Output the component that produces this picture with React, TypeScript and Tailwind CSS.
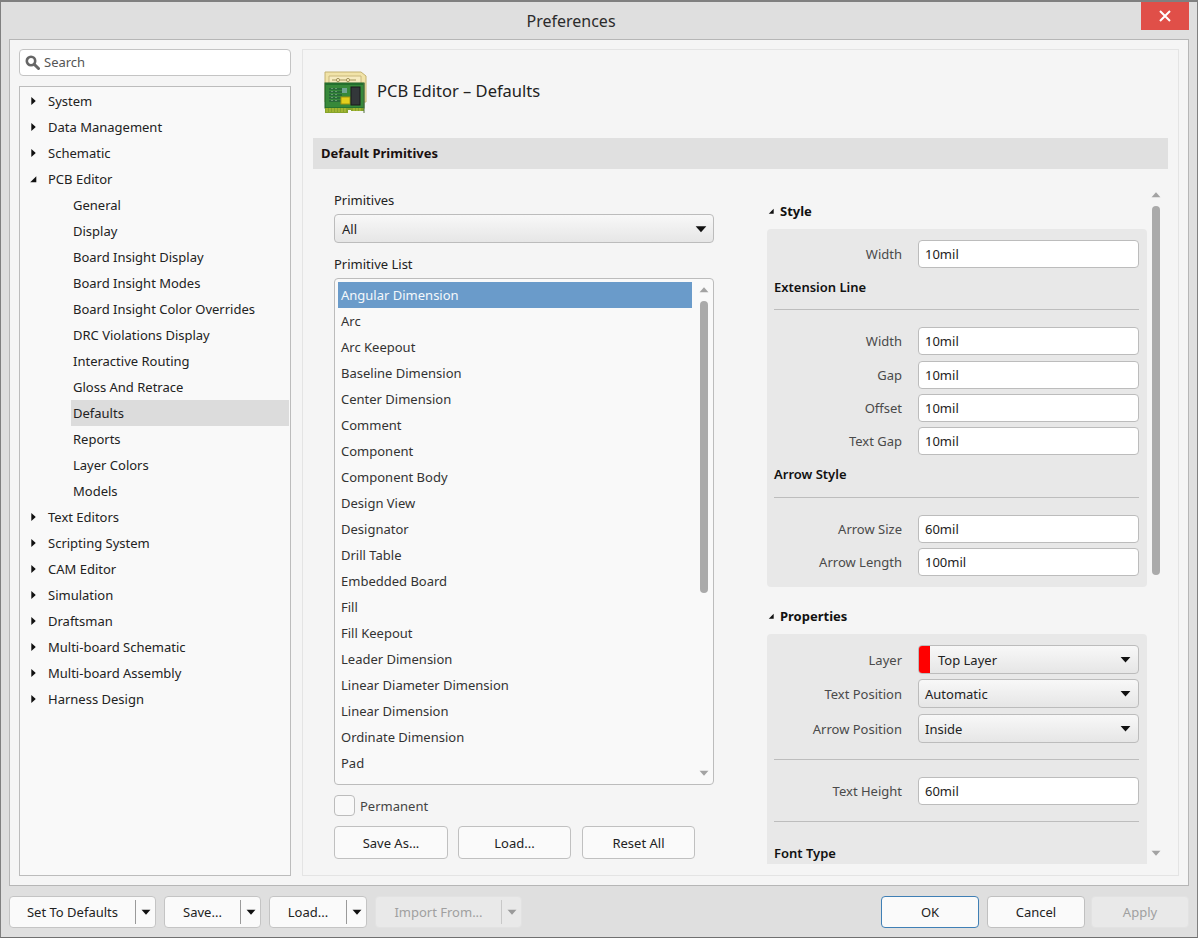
import clsx from "clsx";

const tree = [
  { label: "System" },
  { label: "Data Management" },
  { label: "Schematic" },
  { label: "PCB Editor", open: true },
  { label: "General", child: true },
  { label: "Display", child: true },
  { label: "Board Insight Display", child: true },
  { label: "Board Insight Modes", child: true },
  { label: "Board Insight Color Overrides", child: true },
  { label: "DRC Violations Display", child: true },
  { label: "Interactive Routing", child: true },
  { label: "Gloss And Retrace", child: true },
  { label: "Defaults", child: true, active: true },
  { label: "Reports", child: true },
  { label: "Layer Colors", child: true },
  { label: "Models", child: true },
  { label: "Text Editors" },
  { label: "Scripting System" },
  { label: "CAM Editor" },
  { label: "Simulation" },
  { label: "Draftsman" },
  { label: "Multi-board Schematic" },
  { label: "Multi-board Assembly" },
  { label: "Harness Design" },
];

const primitives = [
  "Angular Dimension",
  "Arc",
  "Arc Keepout",
  "Baseline Dimension",
  "Center Dimension",
  "Comment",
  "Component",
  "Component Body",
  "Design View",
  "Designator",
  "Drill Table",
  "Embedded Board",
  "Fill",
  "Fill Keepout",
  "Leader Dimension",
  "Linear Diameter Dimension",
  "Linear Dimension",
  "Ordinate Dimension",
  "Pad",
];

function Tri({ dir, color = "#111", size = 9 }: { dir: "right" | "open" | "down" | "up"; color?: string; size?: number }) {
  const pts = {
    right: "3,1 7,4.5 3,8",
    open: "7.5,2 7.5,7.5 2,7.5",
    down: "0.5,2.5 8.5,2.5 4.5,7",
    up: "0.5,6.5 8.5,6.5 4.5,2",
  }[dir];
  return (
    <svg width={size} height={size} viewBox="0 0 9 9" className="shrink-0">
      <polygon points={pts} fill={color} />
    </svg>
  );
}

function PcbIcon() {
  return (
    <svg width="44" height="44" viewBox="0 0 44 44" className="shrink-0">
      <path d="M1 2h36l5 4v26H1z" fill="#f1e3a8" stroke="#c4b271" />
      <path d="M5 6h32v8H5z" fill="#f6ebbf" stroke="#c9b87c" />
      <path d="M8 10h24" stroke="#a3945a" />
      <circle cx="14" cy="10" r="1.6" fill="#f6ebbf" stroke="#a3945a" />
      <circle cx="24" cy="10" r="1.6" fill="#f6ebbf" stroke="#a3945a" />
      <rect x="1" y="13" width="39" height="25" fill="#37893a" stroke="#1b5e26" />
      <rect x="1" y="13" width="39" height="2" fill="#236f2e" />
      <path d="M5 19h13M5 22h13M5 25h13M5 28h13M5 31h13" stroke="#1c4f38" strokeWidth="1.2" />
      <path d="M8 18v15M12 18v15" stroke="#a8c8a8" strokeDasharray="1 2" />
      <rect x="18" y="18" width="5" height="5" fill="#6fa593" />
      <rect x="17" y="27" width="9" height="7" fill="#e3cf1c" stroke="#a3950f" />
      <rect x="27" y="17" width="9" height="18" fill="#33373a" stroke="#1a1a1a" />
      <path d="M1 38h39v3H27v-1h-3v3H1z" fill="#86a32a" />
      <path d="M3 38v4M6 38v4M9 38v4M12 38v4M15 38v4M18 38v4M21 38v4M30 38v3M33 38v3M36 38v3" stroke="#bcc438" />
      <path d="M40 13v30" stroke="#557244" />
    </svg>
  );
}

function TextField({ label, value, className }: { label: string; value: string; className?: string }) {
  return (
    <div className={clsx("flex h-[28px] items-center", className)}>
      <span className="w-[128px] text-right text-[#4a4a4a]">{label}</span>
      <div className="ml-[16px] flex h-full w-[221px] items-center rounded-[4px] border border-[#bcbcbc] bg-white pl-[6px] text-[#222]">
        {value}
      </div>
    </div>
  );
}

function SelectField({ label, value, swatch, className }: { label: string; value: string; swatch?: boolean; className?: string }) {
  return (
    <div className={clsx("flex h-[29px] items-center", className)}>
      <span className="w-[128px] text-right text-[#4a4a4a]">{label}</span>
      <div className="ml-[16px] flex h-full w-[221px] items-center overflow-hidden rounded-[4px] border border-[#bcbcbc] bg-gradient-to-b from-[#f8f8f8] to-[#e6e6e6] text-[#222]">
        {swatch ? <span className="mr-[8px] h-full w-[11px] bg-[#ff0000]" /> : <span className="w-[6px]" />}
        <span className="flex-1">{value}</span>
        <span className="mr-[7px]">
          <Tri dir="down" size={11} />
        </span>
      </div>
    </div>
  );
}

function SubHead({ label, className }: { label: string; className?: string }) {
  return <div className={clsx("font-semibold leading-[20px] text-[#111]", className)}>{label}</div>;
}

function Rule({ className }: { className?: string }) {
  return <div className={clsx("h-px bg-[#bdbdbd]", className)} />;
}

function Scrollbar({ className, thumbH }: { className?: string; thumbH: string }) {
  return (
    <div className={clsx("flex w-[9px] flex-col items-center justify-between", className)}>
      <div className="flex flex-col items-center">
        <Tri dir="up" color="#a3a3a3" size={10} />
        <div className={clsx("mt-[6px] w-[8px] rounded-[4px] bg-[#aaaaaa]", thumbH)} />
      </div>
      <Tri dir="down" color="#a3a3a3" size={10} />
    </div>
  );
}

function SplitButton({ label, width, disabled }: { label: string; width: string; disabled?: boolean }) {
  return (
    <div
      className={clsx(
        "flex h-[32px] items-center rounded-[4px] border",
        width,
        disabled ? "border-[#e2e2e2] bg-[#e9e9e9] text-[#a0a0a0]" : "border-[#c4c4c4] bg-[#fafafa] text-[#222]"
      )}
    >
      <span className="flex-1 text-center">{label}</span>
      <span className={clsx("h-[24px] w-px", disabled ? "bg-[#c8c8c8]" : "bg-[#9a9a9a]")} />
      <span className="flex w-[19px] justify-center">
        <Tri dir="down" color={disabled ? "#9a9a9a" : "#111"} size={10} />
      </span>
    </div>
  );
}

function PlainButton({ label, className }: { label: string; className?: string }) {
  return (
    <div className={clsx("flex items-center justify-center rounded-[4px] border", className)}>{label}</div>
  );
}

export default function App() {
  return (
    <div
      className="flex h-[938px] w-[1198px] flex-col overflow-hidden border-x border-b border-t-2 border-x-[#808080] border-b-[#707070] border-t-[#808080] bg-[#dfdfdf] text-[13px] leading-[20px] text-[#222]"
      style={{ fontFamily: '"Noto Sans", "Open Sans", sans-serif' }}
    >
      {/* title bar */}
      <div className="flex h-[37px] shrink-0 items-start">
        <div className="flex-1 pt-[7px] text-center text-[16px] leading-[24px] text-[#2b2b2b]">Preferences</div>
        <div className="mr-[8px] flex h-[28px] w-[48px] items-center justify-center bg-[#e04f48]">
          <svg width="12" height="12" viewBox="0 0 12 12">
            <path d="M1 1l10 10M11 1L1 11" stroke="#fff" strokeWidth="2" />
          </svg>
        </div>
      </div>

      {/* main panel */}
      <div className="mx-[8px] flex h-[847px] shrink-0 gap-[11px] border border-[#b6b6b6] bg-[#f5f5f5] p-[9px]">
        {/* left column */}
        <div className="flex w-[272px] shrink-0 flex-col gap-[10px]">
          <div className="flex h-[27px] items-center rounded-[4px] border border-[#c4c4c4] bg-white pl-[5px] text-[#555]">
            <svg width="15" height="15" viewBox="0 0 15 15" className="mr-[4px]">
              <circle cx="6" cy="6" r="4.2" fill="none" stroke="#666" strokeWidth="2.6" />
              <path d="M9.2 9.2L13.5 13.5" stroke="#666" strokeWidth="3" strokeLinecap="round" />
            </svg>
            <span className="mb-[2px]">Search</span>
          </div>
          <div className="flex-1 border border-[#bcbcbc] bg-[#f9f9f9] pt-[1px] pr-[1px]">
            {tree.map((it) =>
              it.child ? (
                <div
                  key={it.label}
                  className={clsx("ml-[51px] flex h-[26px] items-center pl-[2px]", it.active && "bg-[#dcdcdc]")}
                >
                  {it.label}
                </div>
              ) : (
                <div key={it.label} className="flex h-[26px] items-center pl-[8px]">
                  <span className="flex w-[20px] justify-start">
                    <Tri dir={it.open ? "open" : "right"} size={10} />
                  </span>
                  {it.label}
                </div>
              )
            )}
          </div>
        </div>

        {/* right panel */}
        <div className="flex min-w-0 flex-1 flex-col border border-[#e4e4e4] px-[10px] pt-[20px]">
          <div className="flex h-[44px] items-center pl-[11px]">
            <PcbIcon />
            <span className="mb-[2px] ml-[9px] text-[16.5px] leading-[24px] text-[#222]">PCB Editor – Defaults</span>
          </div>
          <div className="mt-[24px] flex h-[31px] items-center bg-[#e0e0e0] pb-[1px] pl-[8px] font-bold text-[#1a1010]">
            Default Primitives
          </div>

          <div className="flex min-h-0 flex-1">
            {/* primitives column */}
            <div className="ml-[21px] flex w-[380px] shrink-0 flex-col pt-[21px]">
              <div className="leading-[20px]">Primitives</div>
              <div className="mt-[4px] flex h-[29px] items-center rounded-[4px] border border-[#bcbcbc] bg-gradient-to-b from-[#f8f8f8] to-[#e6e6e6] pl-[7px] pr-[6px]">
                <span className="flex-1">All</span>
                <Tri dir="down" size={12} />
              </div>
              <div className="mt-[11px] leading-[20px]">Primitive List</div>
              <div className="mt-[4px] flex h-[507px] rounded-[4px] border border-[#bcbcbc] bg-[#f9f9f9] pl-[3px] pt-[3px] pb-[6px] pr-[5px]">
                <div className="w-[354px] shrink-0">
                  {primitives.map((p, i) => (
                    <div
                      key={p}
                      className={clsx("flex h-[26px] items-center pl-[3px]", i === 0 ? "bg-[#6a9bca] text-[#f4f8fb]" : "text-[#333]")}
                    >
                      {p}
                    </div>
                  ))}
                </div>
                <Scrollbar className="ml-[7px] pt-[3px]" thumbH="h-[292px]" />
              </div>
              <div className="mt-[10px] flex h-[21px] items-center">
                <span className="h-[21px] w-[21px] rounded-[4px] border border-[#bcbcbc] bg-[#f9f9f9]" />
                <span className="ml-[5px] text-[#444]">Permanent</span>
              </div>
              <div className="mt-[10px] flex gap-[10px]">
                <PlainButton label="Save As..." className="h-[33px] w-[114px] border-[#c0c0c0] bg-[#fafafa]" />
                <PlainButton label="Load..." className="h-[33px] w-[113px] border-[#c0c0c0] bg-[#fafafa]" />
                <PlainButton label="Reset All" className="ml-[1px] h-[33px] w-[113px] border-[#c0c0c0] bg-[#fafafa]" />
              </div>
            </div>

            {/* properties column */}
            <div className="ml-[53px] flex w-[394px] shrink-0 pt-[22px]">
              <div className="w-[380px] shrink-0 overflow-hidden">
                <div className="flex h-[38px] items-center pt-[1px] font-bold text-[#111]">
                  <span className="mr-[5px]">
                    <Tri dir="open" size={8} />
                  </span>
                  Style
                </div>
                <div className="h-[358px] rounded-[4px] bg-[#e8e8e8] px-[7px] pt-[11px]">
                  <TextField label="Width" value="10mil" />
                  <SubHead label="Extension Line" className="mt-[9px]" />
                  <Rule className="mt-[12px] w-[365px]" />
                  <TextField label="Width" value="10mil" className="mt-[17px]" />
                  <TextField label="Gap" value="10mil" className="mt-[6px]" />
                  <TextField label="Offset" value="10mil" className="mt-[5px]" />
                  <TextField label="Text Gap" value="10mil" className="mt-[5px]" />
                  <SubHead label="Arrow Style" className="mt-[9px]" />
                  <Rule className="mt-[13px] w-[365px]" />
                  <TextField label="Arrow Size" value="60mil" className="mt-[17px]" />
                  <TextField label="Arrow Length" value="100mil" className="mt-[5px]" />
                </div>
                <div className="mt-[11px] flex h-[36px] items-center font-bold text-[#111]">
                  <span className="mr-[5px]">
                    <Tri dir="open" size={8} />
                  </span>
                  Properties
                </div>
                <div className="h-[230px] overflow-hidden rounded-t-[4px] bg-[#e8e8e8] px-[7px] pt-[11px]">
                  <SelectField label="Layer" value="Top Layer" swatch />
                  <SelectField label="Text Position" value="Automatic" className="mt-[5px]" />
                  <SelectField label="Arrow Position" value="Inside" className="mt-[6px]" />
                  <Rule className="mt-[16px] w-[365px]" />
                  <TextField label="Text Height" value="60mil" className="mt-[17px]" />
                  <Rule className="mt-[16px] w-[365px]" />
                  <SubHead label="Font Type" className="mt-[21px]" />
                </div>
              </div>
              <Scrollbar className="-mt-[1px] ml-[4px] h-[668px]" thumbH="h-[369px]" />
            </div>
          </div>
        </div>
      </div>

      {/* footer */}
      <div className="mx-[8px] mt-[10px] flex items-start">
        <div className="flex gap-[8px]">
          <SplitButton label="Set To Defaults" width="w-[147px]" />
          <SplitButton label="Save..." width="w-[97px]" />
          <SplitButton label="Load..." width="w-[98px]" />
          <SplitButton label="Import From..." width="w-[147px]" disabled />
        </div>
        <div className="ml-auto flex gap-[8px]">
          <PlainButton label="OK" className="h-[32px] w-[98px] border-[#3f7fb5] bg-[#fafafa]" />
          <PlainButton label="Cancel" className="h-[32px] w-[98px] border-[#c0c0c0] bg-[#fafafa]" />
          <PlainButton label="Apply" className="-ml-[2px] h-[32px] w-[98px] border-[#e2e2e2] bg-[#e9e9e9] text-[#a0a0a0]" />
        </div>
      </div>
    </div>
  );
}
